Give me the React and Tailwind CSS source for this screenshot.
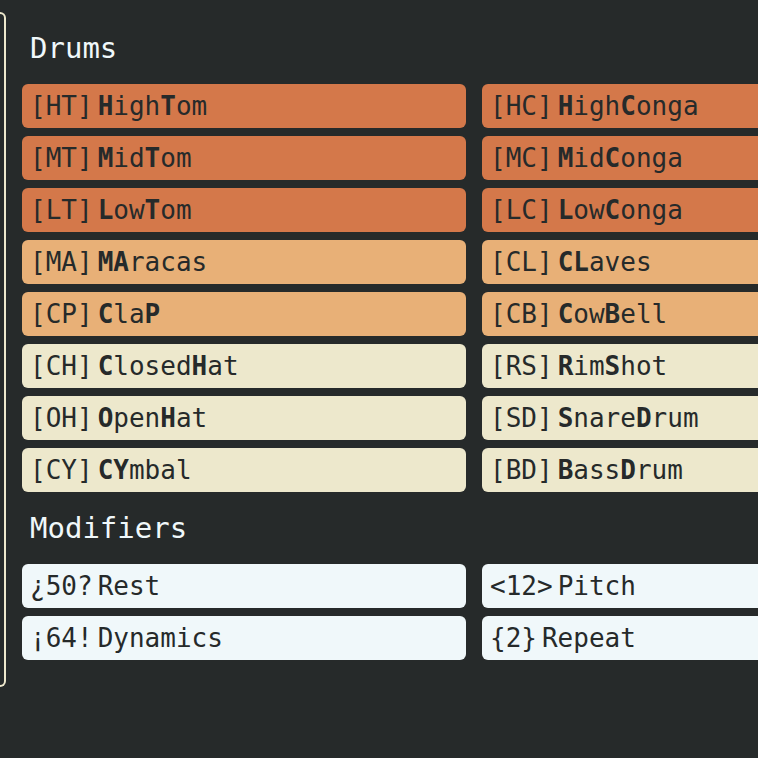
import React from "react";

const drums = [
  ["HT", "HighTom", [0, 4], "o"],
  ["HC", "HighConga", [0, 4], "o"],
  ["MT", "MidTom", [0, 3], "o"],
  ["MC", "MidConga", [0, 3], "o"],
  ["LT", "LowTom", [0, 3], "o"],
  ["LC", "LowConga", [0, 3], "o"],
  ["MA", "MAracas", [0, 1], "l"],
  ["CL", "CLaves", [0, 1], "l"],
  ["CP", "ClaP", [0, 3], "l"],
  ["CB", "CowBell", [0, 3], "l"],
  ["CH", "ClosedHat", [0, 6], "c"],
  ["RS", "RimShot", [0, 3], "c"],
  ["OH", "OpenHat", [0, 4], "c"],
  ["SD", "SnareDrum", [0, 5], "c"],
  ["CY", "CYmbal", [0, 1], "c"],
  ["BD", "BassDrum", [0, 4], "c"],
];

const bg = {
  o: "bg-[#d4784a]",
  l: "bg-[#e8b077]",
  c: "bg-[#ede8cc]",
};

const modifiers = [
  ["¿50?", "Rest"],
  ["<12>", "Pitch"],
  ["¡64!", "Dynamics"],
  ["{2}", "Repeat"],
];

function Name({ name, bold }) {
  return (
    <span className="ml-[5px]">
      {name.split("").map((ch, i) =>
        bold.includes(i) ? (
          <b key={i} className="font-bold">
            {ch}
          </b>
        ) : (
          <span key={i}>{ch}</span>
        )
      )}
    </span>
  );
}

export default function App() {
  return (
    <div
      className="w-[758px] h-[758px] overflow-hidden bg-[#262a2a] flex"
      style={{ fontFamily: '"DejaVu Sans Mono", monospace' }}
    >
      <div className="w-[6px] shrink-0 mt-[12px] h-[675px] border-2 border-l-0 border-[#ede8cc] rounded-r-[6px]" />
      <div className="ml-[16px] pt-[31px] shrink-0">
        <h2 className="text-[29px] leading-[34px] text-[#f0f8fa] ml-[8px] mb-[19px]">Drums</h2>
        <div className="grid grid-cols-[444px_444px] gap-x-[16px] gap-y-[8px]">
          {drums.map(([code, name, bold, c]) => (
            <div
              key={code}
              className={`${bg[c]} h-[44px] rounded-[6px] px-[8px] text-[26px] leading-[44px] text-[#262a2a] whitespace-pre`}
            >
              <span>[{code}]</span>
              <Name name={name} bold={bold} />
            </div>
          ))}
        </div>
        <h2 className="text-[29px] leading-[34px] text-[#f0f8fa] ml-[8px] mt-[19px] mb-[19px]">Modifiers</h2>
        <div className="grid grid-cols-[444px_444px] gap-x-[16px] gap-y-[8px]">
          {modifiers.map(([code, label]) => (
            <div
              key={label}
              className="bg-[#f0f8fa] h-[44px] rounded-[6px] px-[8px] text-[26px] leading-[44px] text-[#262a2a] whitespace-pre"
            >
              <span>{code}</span>
              <span className="ml-[5px]">{label}</span>
            </div>
          ))}
        </div>
      </div>
    </div>
  );
}
